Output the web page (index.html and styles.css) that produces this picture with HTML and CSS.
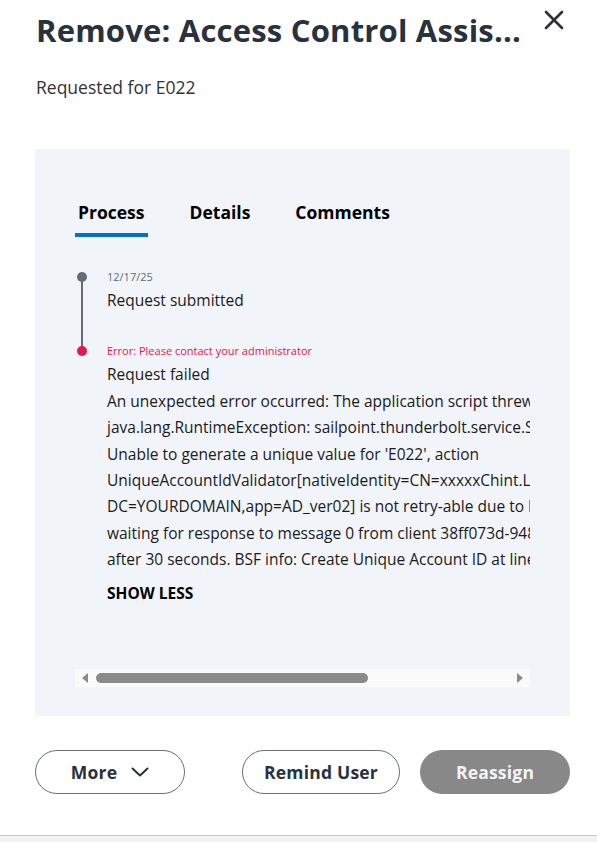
FILE: index.html
```html
<!DOCTYPE html>
<html lang="en">
<head>
    <meta charset="UTF-8">
    <meta name="viewport" content="width=device-width, initial-scale=1.0">
    <title>Request Details</title>
    <link rel="stylesheet" href="styles.css">
</head>
<body>
    <div class="drawer">
        <!-- Header -->
        <header class="drawer-header">
            <h1 class="drawer-title">Remove: Access Control Assis...</h1>
            <button class="close-btn" aria-label="Close">
                <svg width="20" height="20" viewBox="0 0 20 20">
                    <path d="M2 2 L18 18 M18 2 L2 18" stroke="#28323e" stroke-width="2.6" stroke-linecap="round"/>
                </svg>
            </button>
        </header>
        <p class="requested-for">Requested for E022</p>

        <!-- Process panel -->
        <section class="panel">
            <nav class="tabs">
                <a href="#" class="tab active">Process</a>
                <a href="#" class="tab">Details</a>
                <a href="#" class="tab">Comments</a>
            </nav>

            <div class="scroll-area">
                <div class="timeline">
                    <div class="step">
                        <span class="dot"></span>
                        <div class="step-label">12/17/25</div>
                        <div class="step-title">Request submitted</div>
                    </div>
                    <div class="step step-error">
                        <span class="dot"></span>
                        <div class="step-label">Error: Please contact your administrator</div>
                        <div class="step-title">Request failed</div>
                        <div class="step-message">
                            <div>An unexpected error occurred: The application script threw an exception:</div>
                            <div>java.lang.RuntimeException: sailpoint.thunderbolt.service.ServiceException:</div>
                            <div>Unable to generate a unique value for 'E022', action</div>
                            <div>UniqueAccountIdValidator[nativeIdentity=CN=xxxxxChint.Lxxxx,OU=Users,</div>
                            <div>DC=YOURDOMAIN,app=AD_ver02] is not retry-able due to IOException: timed out</div>
                            <div>waiting for response to message 0 from client 38ff073d-9480-4c0e-a2b7</div>
                            <div>after 30 seconds. BSF info: Create Unique Account ID at line: 0 column: 0</div>
                        </div>
                        <a href="#" class="show-less">SHOW LESS</a>
                    </div>
                </div>
            </div>

            <div class="scrollbar">
                <span class="arrow arrow-left"></span>
                <span class="thumb"></span>
                <span class="arrow arrow-right"></span>
            </div>
        </section>

        <!-- Actions -->
        <footer class="actions">
            <button class="btn btn-outline btn-more">
                More
                <svg width="18" height="10" viewBox="0 0 18 10">
                    <path d="M1.5 1.5 L9 8.5 L16.5 1.5" fill="none" stroke="#28323e" stroke-width="2" stroke-linecap="round" stroke-linejoin="round"/>
                </svg>
            </button>
            <div class="actions-right">
                <button class="btn btn-outline btn-remind">Remind User</button>
                <button class="btn btn-disabled">Reassign</button>
            </div>
        </footer>
    </div>
    <div class="page-edge"></div>
</body>
</html>
```

FILE: styles.css
```css
:root {
    --text-dark: #28323e;
    --panel-bg: #f1f4f8;
    --brand-blue: #0071ce;
    --error-red: #e3174d;
    --muted: #626c78;
}

body {
    margin: 0;
    padding: 0;
    background: #fff;
    color: #1b1b1b;
    font-family: 'Open Sans', 'Noto Sans', sans-serif;
}

.drawer {
    height: 835px;
    padding: 0 27px 0 35px;
    box-sizing: border-box;
}

/* Header */
.drawer-header {
    display: flex;
    justify-content: space-between;
    align-items: flex-start;
    padding-top: 12px;
}

.drawer-title {
    margin: 0 0 0 1px;
    font-size: 31px;
    line-height: 36px;
    font-weight: 700;
    letter-spacing: 0.2px;
    color: var(--text-dark);
    white-space: nowrap;
}

.close-btn {
    background: none;
    border: none;
    padding: 0;
    margin: -2px 6px 0 0;
    cursor: pointer;
    display: flex;
}

.requested-for {
    margin: 28px 0 0 1px;
    font-size: 17.5px;
    line-height: 22px;
    color: #333;
}

/* Panel */
.panel {
    background: var(--panel-bg);
    margin-top: 51px;
    padding: 51px 40px 29px 40px;
}

.tabs {
    display: flex;
    gap: 39px;
}

.tab {
    color: #000;
    text-decoration: none;
    font-size: 17.5px;
    font-weight: 700;
    line-height: 24px;
    padding: 0 3px 9px;
    border-bottom: 4px solid transparent;
    border-radius: 3px 3px 0 0;
}

.tab.active {
    border-bottom-color: var(--brand-blue);
}

.scroll-area {
    margin-top: 30px;
    overflow: hidden;
    padding-bottom: 65px;
}

.timeline {
    padding-left: 32px;
    white-space: nowrap;
}

.step {
    position: relative;
}

.step + .step {
    margin-top: 28px;
}

.dot {
    position: absolute;
    left: -30px;
    top: 5px;
    width: 10px;
    height: 10px;
    border-radius: 50%;
    background: var(--muted);
}

.step:first-child::after {
    content: "";
    position: absolute;
    left: -26px;
    top: 10px;
    bottom: -38px;
    width: 2px;
    background: var(--muted);
}

.step-error .dot {
    background: var(--error-red);
    z-index: 1;
}

.step-label {
    font-size: 11px;
    line-height: 20px;
    color: var(--muted);
}

.step-error .step-label {
    color: var(--error-red);
}

.step-title,
.step-message {
    font-size: 15.5px;
    line-height: 26.4px;
    color: #1b1b1b;
}

.show-less {
    display: inline-block;
    margin-top: 10px;
    font-size: 15.5px;
    line-height: 20px;
    font-weight: 700;
    color: #000;
    text-decoration: none;
}

/* Fake horizontal scrollbar */
.scrollbar {
    display: flex;
    align-items: center;
    height: 18px;
    background: #fafafa;
    padding: 0 7px;
    gap: 8px;
}

.thumb {
    width: 272px;
    height: 10px;
    border-radius: 5px;
    background: #8a8a8a;
}

.arrow {
    width: 0;
    height: 0;
    border-top: 5px solid transparent;
    border-bottom: 5px solid transparent;
}

.arrow-left {
    border-right: 6px solid #8a8a8a;
}

.arrow-right {
    margin-left: auto;
    border-left: 6px solid #8a8a8a;
}

/* Actions */
.actions {
    display: flex;
    justify-content: space-between;
    margin-top: 34px;
}

.actions-right {
    display: flex;
    gap: 20px;
}

.btn {
    height: 44px;
    border-radius: 22px;
    font-family: inherit;
    font-size: 17.5px;
    font-weight: 700;
    letter-spacing: 0.2px;
    display: flex;
    align-items: center;
    justify-content: center;
    gap: 14px;
    cursor: pointer;
}

.btn-outline {
    background: #fff;
    border: 1px solid #67707c;
    color: var(--text-dark);
}

.btn-more {
    width: 150px;
}

.btn-remind {
    width: 158px;
}

.btn-disabled {
    width: 150px;
    background: #888;
    border: none;
    color: #f4f4f4;
}

.page-edge {
    height: 7px;
    border-top: 1px solid #c9c9c9;
    background: #f2f2f2;
}
```
